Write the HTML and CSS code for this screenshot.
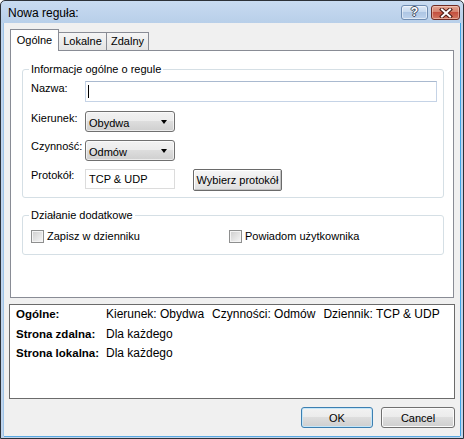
FILE: index.html
```html
<!DOCTYPE html>
<html lang="pl">
<head>
<meta charset="utf-8">
<title>Nowa reguła</title>
<link rel="stylesheet" href="styles.css">
</head>
<body>
<div class="window">
  <div class="titlebar">
    <span class="title">Nowa reguła:</span>
    <div class="caption-btns">
      <div class="cap help"><span class="q">?</span></div>
      <div class="cap close">
        <svg width="14" height="10" viewBox="0 0 14 10">
          <path d="M3 1.5 L11 8.5 M11 1.5 L3 8.5" stroke="#4a1a14" stroke-width="4" stroke-linecap="square" fill="none"/>
          <path d="M3 1.5 L11 8.5 M11 1.5 L3 8.5" stroke="#ffffff" stroke-width="2" stroke-linecap="square" fill="none"/>
        </svg>
      </div>
    </div>
  </div>
  <div class="client">
    <div class="tabs">
      <div class="tab active">Ogólne</div>
      <div class="tab t-lok">Lokalne</div>
      <div class="tab t-zd">Zdalny</div>
    </div>
    <div class="panel">
      <fieldset class="group g1">
        <legend>Informacje ogólne o regule</legend>
        <div class="row r1">
          <span class="lbl">Nazwa:</span>
          <div class="textbox name"><span class="caret"></span></div>
        </div>
        <div class="row r2">
          <span class="lbl">Kierunek:</span>
          <div class="combo"><span>Obydwa</span><span class="arrow"></span></div>
        </div>
        <div class="row r3">
          <span class="lbl">Czynność:</span>
          <div class="combo"><span>Odmów</span><span class="arrow"></span></div>
        </div>
        <div class="row r4">
          <span class="lbl">Protokół:</span>
          <div class="textbox proto">TCP &amp; UDP</div>
          <div class="classic-btn">Wybierz protokół</div>
        </div>
      </fieldset>
      <fieldset class="group g2">
        <legend>Działanie dodatkowe</legend>
        <div class="checks">
          <div class="check c1"><span class="box"></span><span>Zapisz w dzienniku</span></div>
          <div class="check"><span class="box"></span><span>Powiadom użytkownika</span></div>
        </div>
      </fieldset>
    </div>
    <div class="summary">
      <div class="srow"><span class="skey">Ogólne:</span><span class="sval"><span>Kierunek: Obydwa</span><span>Czynności: Odmów</span><span>Dziennik: TCP &amp; UDP</span></span></div>
      <div class="srow"><span class="skey">Strona zdalna:</span><span class="sval">Dla każdego</span></div>
      <div class="srow"><span class="skey">Strona lokalna:</span><span class="sval">Dla każdego</span></div>
    </div>
    <div class="footer">
      <div class="btn default">OK</div>
      <div class="btn cancel">Cancel</div>
    </div>
  </div>
</div>
</body>
</html>
```
FILE: styles.css
```css
* { box-sizing: border-box; }
html, body { margin: 0; padding: 0; }
body {
  width: 464px;
  height: 439px;
  overflow: hidden;
  background: #ffffff;
  font-family: "Liberation Sans", Arial, sans-serif;
  font-size: 11px;
  color: #000;
}

.window {
  width: 464px;
  height: 439px;
  border: 1px solid #2c3138;
  border-radius: 5px 5px 0 0;
  background: linear-gradient(#c8dbf1 0, #b8cfe9 22px, #bfd4ec 22px, #bfd4ec 100%);
  padding: 0 3px 2px 3px;
  display: flex;
  flex-direction: column;
}

.titlebar {
  height: 22px;
  flex: none;
  display: flex;
  justify-content: space-between;
  align-items: flex-start;
  padding-left: 4px;
}
.title {
  font-size: 12px;
  line-height: 22px;
  padding-top: 1px;
}
.caption-btns {
  display: flex;
  gap: 3px;
  margin-top: 4px;
}
.cap {
  height: 15px;
  border-radius: 3px;
  display: flex;
  align-items: center;
  justify-content: center;
}
.help {
  width: 27px;
  border: 1px solid #6f8cb1;
  background: linear-gradient(#dfeaf7 0, #c4d7ee 50%, #aec6e4 50%, #bed3ed 100%);
  box-shadow: inset 0 0 0 1px rgba(255,255,255,0.5);
}
.help .q {
  color: #fff;
  font-weight: bold;
  font-size: 12px;
  line-height: 13px;
  text-shadow: 1px 0 0 #3d4a5c, -1px 0 0 #3d4a5c, 0 1px 0 #3d4a5c, 0 -1px 0 #3d4a5c;
}
.close {
  width: 29px;
  border: 1px solid #6e2a22;
  background: linear-gradient(#e3a592 0, #d5826e 45%, #c4503f 50%, #d27660 100%);
  box-shadow: inset 0 0 0 1px rgba(255,230,220,0.45);
}

.client {
  flex: 1;
  background: #f0f0f0;
  box-shadow: -1px 0 0 #9ec4e8, 1px 0 0 #3ea2e4, 0 1px 0 #5aa9e2;
  padding: 6px 6px 0 6px;
  display: flex;
  flex-direction: column;
}

.tabs {
  height: 21px;
  display: flex;
  align-items: flex-end;
  position: relative;
  z-index: 1;
}
.tab {
  height: 18px;
  border: 1px solid #898c95;
  border-bottom: none;
  border-left: none;
  background: linear-gradient(#f5f5f5, #e4e4e4);
  text-align: center;
  line-height: 17px;
}
.tab.active {
  width: 49px;
  height: 22px;
  margin-bottom: -1px;
  border-left: 1px solid #898c95;
  background: #fff;
  line-height: 21px;
}
.t-lok { width: 48px; }
.t-zd { width: 42px; }

.panel {
  height: 248px;
  flex: none;
  border: 1px solid #898c95;
  background: #fff;
}

.group {
  margin: 11px 9px 0 11px;
  padding: 4px 6px 6px 6px;
  border: 1px solid #d5dfe5;
  border-radius: 3px;
  min-width: 0;
}
.group legend {
  padding: 0 2px;
  line-height: 15px;
}

.row {
  display: flex;
  align-items: flex-start;
  margin-left: 2px;
}
.r2 { margin-top: 9px; }
.r3 { margin-top: 8px; }
.r4 { margin-top: 8px; }
.lbl {
  width: 54px;
  flex: none;
  line-height: 15px;
}
.r3 .lbl, .r4 .lbl { margin-top: -1px; }

.textbox {
  background: #fff;
  display: flex;
  align-items: center;
}
.name {
  flex: 1;
  height: 21px;
  border: 1px solid #c5d3e6;
  border-top-color: #a9b9cf;
  padding-left: 2px;
}
.caret {
  width: 1px;
  height: 13px;
  background: #000;
}
.proto {
  width: 90px;
  height: 20px;
  border: 1px solid #dcdcdc;
  padding-left: 3px;
}

.combo {
  width: 90px;
  height: 21px;
  border: 1px solid #707070;
  border-radius: 3px;
  background: linear-gradient(#f2f2f2 0%, #ebebeb 50%, #dddddd 50%, #cfcfcf 100%);
  box-shadow: inset 0 0 0 1px rgba(255,255,255,0.6);
  display: flex;
  align-items: center;
  justify-content: space-between;
  padding: 2px 7px 0 3px;
}
.arrow {
  width: 0;
  height: 0;
  border-left: 3.5px solid transparent;
  border-right: 3.5px solid transparent;
  border-top: 4px solid #000;
  margin-top: -1px;
}

.classic-btn {
  margin-left: 18px;
  width: 89px;
  height: 22px;
  border: 1px solid #6a6a6a;
  border-radius: 2px;
  background: linear-gradient(#f7f7f7, #dedede);
  box-shadow: inset 1px 1px 0 #ffffff, inset -1px -1px 0 #c2c2c2;
  display: flex;
  align-items: center;
  justify-content: center;
  white-space: nowrap;
}

.g2 {
  margin-top: 10px;
  padding-top: 6px;
  padding-bottom: 10px;
}
.checks {
  display: flex;
  margin-left: 2px;
}
.check {
  display: flex;
  align-items: center;
  line-height: 15px;
}
.c1 { width: 198px; }
.box {
  width: 13px;
  height: 13px;
  margin-right: 3px;
  border: 1px solid #8e8f8f;
  background: linear-gradient(135deg, #cdcdcd, #f7f7f7);
  box-shadow: inset 0 0 0 1px #f4f4f4;
}

.summary {
  height: 95px;
  flex: none;
  margin: 6px -1px 0 -1px;
  border: 1px solid #6b6b6b;
  background: #fff;
  padding: 0 6px;
  font-size: 12px;
  line-height: 19.5px;
}
.srow { display: flex; white-space: nowrap; }
.skey { width: 90px; flex: none; font-weight: bold; font-size: 11.5px; }
.sval span { margin-right: 8px; }

.footer {
  display: flex;
  justify-content: flex-end;
  gap: 8px;
  margin: 8px -1px 0 0;
}
.btn {
  width: 72px;
  height: 21px;
  border: 1px solid #707070;
  border-radius: 3px;
  background: linear-gradient(#f2f2f2 0%, #ebebeb 50%, #dddddd 50%, #cfcfcf 100%);
  box-shadow: inset 0 0 0 1px #fbfbfb;
  display: flex;
  align-items: center;
  justify-content: center;
}
.btn.default {
  border-color: #3c7fb1;
  box-shadow: inset 0 0 0 1px #c5e6f8;
}
.btn.cancel { width: 74px; }
```
